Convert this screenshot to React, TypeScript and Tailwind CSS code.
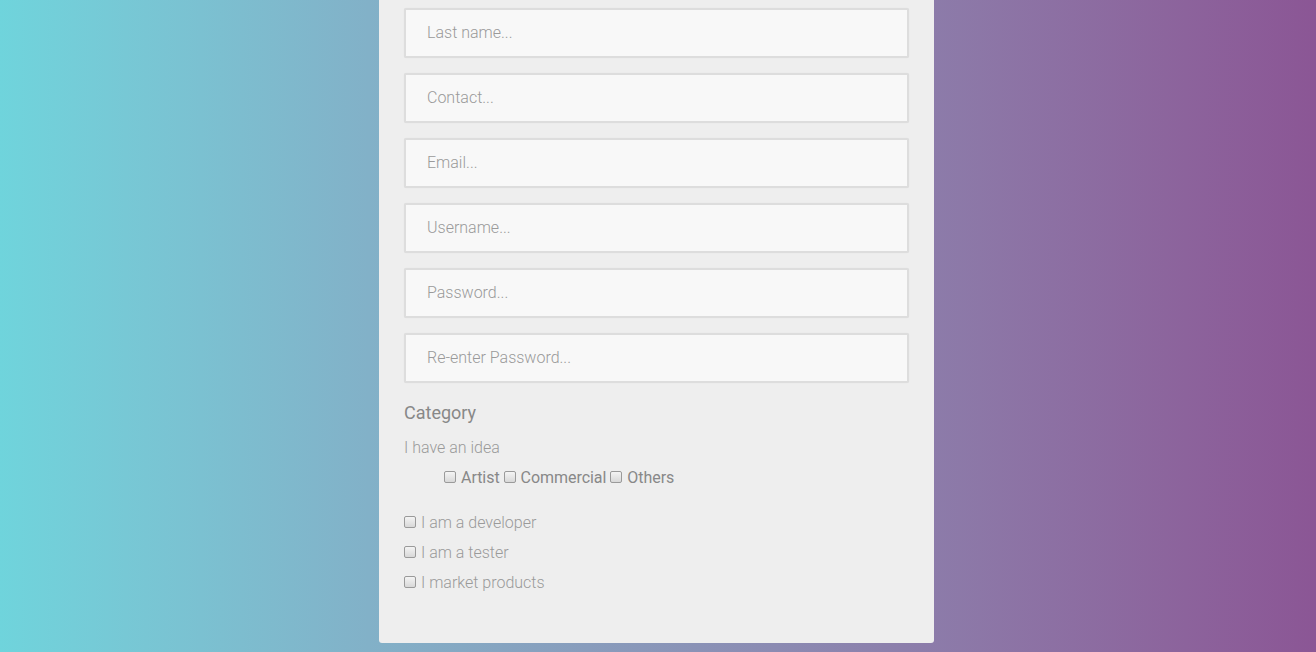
import { useState } from 'react'

const fields = ['Last name...', 'Contact...', 'Email...', 'Username...', 'Password...', 'Re-enter Password...']

function Box({ checked, onChange }: { checked: boolean; onChange: () => void }) {
  return (
    <input
      type="checkbox"
      checked={checked}
      onChange={onChange}
      className="appearance-none w-[12px] h-[12px] -mt-[2px] rounded-[2px] border border-[#9a9a9a] bg-gradient-to-b from-[#f4f4f4] to-[#d8d8d8] checked:bg-[#888] shrink-0"
    />
  )
}

export default function App() {
  const [checks, setChecks] = useState<Record<string, boolean>>({})
  const toggle = (k: string) => setChecks(c => ({ ...c, [k]: !c[k] }))

  return (
    <main className="min-h-screen w-full bg-gradient-to-r from-[#6fd4dc] to-[#8b5695] pb-[10px] font-['Roboto',sans-serif]">
      <div className="ml-[379px] w-[555px] bg-[#eeeeee] rounded-b-[3px] pt-[8px] px-[25px] pb-[45px]">

        {/* ── Text inputs ── */}
        <div className="flex flex-col gap-[15px]">
          {fields.map(f => (
            <input
              key={f}
              type={f.startsWith('Pass') || f.startsWith('Re-enter') ? 'password' : 'text'}
              placeholder={f}
              className="w-[505px] h-[50px] border-2 border-[#dddddd] rounded-[2px] bg-[#f8f8f8] pl-[21px] pb-[2px] text-[16px] font-light text-[#666] placeholder:text-[#9a9a9a] outline-none shadow-[0_0_1px_rgba(0,0,0,0.08)]"
            />
          ))}
        </div>

        {/* ── Category ── */}
        <h3 className="mt-[18px] text-[18px] leading-[24px] text-[#888]">Category</h3>
        <p className="mt-[11px] text-[16px] leading-[24px] font-light text-[#9a9a9a]">I have an idea</p>

        <div className="mt-[6px] ml-[40px] flex items-center h-[24px] text-[16px] text-[#888] tracking-[-0.05px]">
          <Box checked={!!checks.artist} onChange={() => toggle('artist')} />
          <span className="ml-[5px] mr-[4px]">Artist</span>
          <Box checked={!!checks.commercial} onChange={() => toggle('commercial')} />
          <span className="ml-[5px] mr-[4px]">Commercial</span>
          <Box checked={!!checks.others} onChange={() => toggle('others')} />
          <span className="ml-[5px]">Others</span>
        </div>

        <div className="mt-[18px] flex flex-col">
          {['I am a developer', 'I am a tester', 'I market products'].map(l => (
            <label key={l} className="flex items-center h-[30px] text-[16px] font-light text-[#9a9a9a]">
              <Box checked={!!checks[l]} onChange={() => toggle(l)} />
              <span className="ml-[5px]">{l}</span>
            </label>
          ))}
        </div>

      </div>
    </main>
  )
}
